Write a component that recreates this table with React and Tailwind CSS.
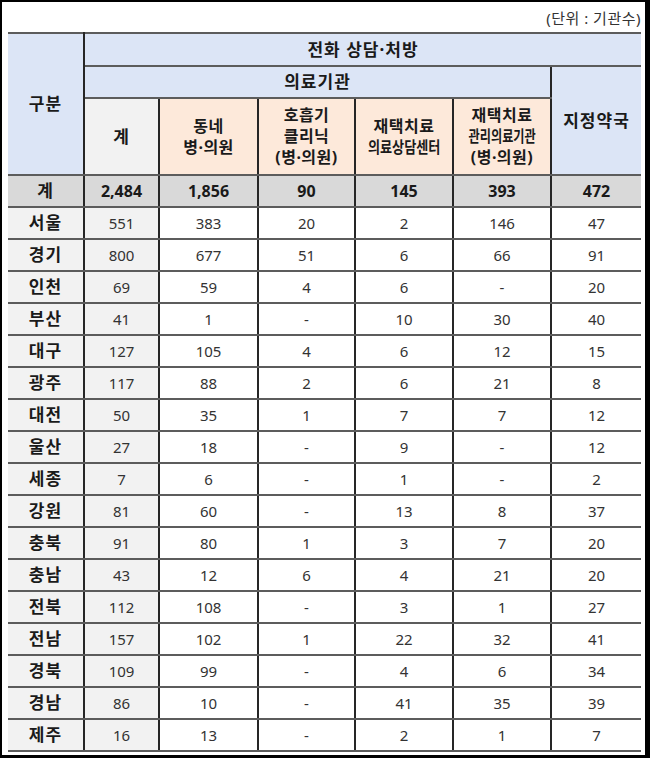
import React from 'react'

const rows = [
  ['서울', '551', '383', '20', '2', '146', '47'],
  ['경기', '800', '677', '51', '6', '66', '91'],
  ['인천', '69', '59', '4', '6', '-', '20'],
  ['부산', '41', '1', '-', '10', '30', '40'],
  ['대구', '127', '105', '4', '6', '12', '15'],
  ['광주', '117', '88', '2', '6', '21', '8'],
  ['대전', '50', '35', '1', '7', '7', '12'],
  ['울산', '27', '18', '-', '9', '-', '12'],
  ['세종', '7', '6', '-', '1', '-', '2'],
  ['강원', '81', '60', '-', '13', '8', '37'],
  ['충북', '91', '80', '1', '3', '7', '20'],
  ['충남', '43', '12', '6', '4', '21', '20'],
  ['전북', '112', '108', '-', '3', '1', '27'],
  ['전남', '157', '102', '1', '22', '32', '41'],
  ['경북', '109', '99', '-', '4', '6', '34'],
  ['경남', '86', '10', '-', '41', '35', '39'],
  ['제주', '16', '13', '-', '2', '1', '7'],
]

const total = ['계', '2,484', '1,856', '90', '145', '393', '472']

// horizontal lines are grey, vertical ones near black
const hb = 'border-b-2 border-b-[#5c5c5c]'
const vr = 'border-r-2 border-r-[#262626]'
const ko = 'text-[17px] tracking-[1px]'
const multi = 'text-[16px] leading-[21px] tracking-[0.5px]'

const App = () => {
  return (
    <div className="w-[650px] h-[758px] bg-white border-l-2 border-t-2 border-r-[5px] border-b-[3px] border-black pl-[6px] pr-[4px] font-['Noto_Sans','Noto_Sans_CJK_KR',sans-serif] text-[#333]">
      <div className="h-[30px] flex items-center justify-end text-[15px] tracking-[0.5px] pt-[2px]">(단위 : 기관수)</div>
      <table className="w-[633px] table-fixed border-collapse text-[15px] text-center">
        <colgroup>
          <col className="w-[76px]" />
          <col className="w-[75px]" />
          <col className="w-[99px]" />
          <col className="w-[97px]" />
          <col className="w-[98px]" />
          <col className="w-[98px]" />
          <col className="w-[90px]" />
        </colgroup>
        <thead className="font-bold text-[#1a1a1a] text-[17px]">
          <tr className="h-[33px]">
            <th rowSpan={3} className={`bg-[#dce5f6] border-t-2 border-t-[#5c5c5c] ${hb} ${vr} ${ko}`}>구분</th>
            <th colSpan={6} className={`bg-[#dce5f6] border-t-2 border-t-[#5c5c5c] ${hb} ${ko}`}>전화 상담·처방</th>
          </tr>
          <tr className="h-[32px]">
            <th colSpan={5} className={`bg-[#dce5f6] ${hb} ${vr} ${ko}`}>의료기관</th>
            <th rowSpan={2} className={`bg-[#dce5f6] ${hb} ${ko}`}>지정약국</th>
          </tr>
          <tr className="h-[77px]">
            <th className={`bg-[#f2f2f2] ${hb} ${vr} ${ko}`}>계</th>
            <th className={`bg-[#fde9da] ${hb} ${vr} ${multi}`}>
              동네<br />병·의원
            </th>
            <th className={`bg-[#fde9da] ${hb} ${vr} ${multi}`}>
              호흡기<br />클리닉<br />(병·의원)
            </th>
            <th className={`bg-[#fde9da] ${hb} ${vr} ${multi}`}>
              재택치료<br />
              <span className="inline-block whitespace-nowrap tracking-normal -mx-[9px] scale-x-[0.82]">의료상담센터</span>
            </th>
            <th className={`bg-[#fde9da] ${hb} ${vr} ${multi}`}>
              재택치료<br />
              <span className="inline-block whitespace-nowrap tracking-normal -mx-[12px] scale-x-[0.76]">관리의료기관</span><br />
              (병·의원)
            </th>
          </tr>
        </thead>
        <tbody>
          <tr className="h-[32px] bg-[#d9d9d9] font-bold text-[#1a1a1a] text-[16px]">
            {total.map((v, i) => (
              <td key={i} className={`${hb} ${i < 6 ? vr : ''} ${i === 0 ? ko : ''}`}>{v}</td>
            ))}
          </tr>
          {rows.map((r) => (
            <tr key={r[0]} className="h-[32px]">
              {r.map((v, i) => (
                <td
                  key={i}
                  className={`${hb} ${i < 6 ? vr : ''} ${i < 2 ? 'bg-[#f2f2f2]' : 'bg-white'} ${i === 0 ? `font-bold text-[#1a1a1a] ${ko}` : ''}`}
                >
                  {v}
                </td>
              ))}
            </tr>
          ))}
        </tbody>
      </table>
    </div>
  )
}

export default App
